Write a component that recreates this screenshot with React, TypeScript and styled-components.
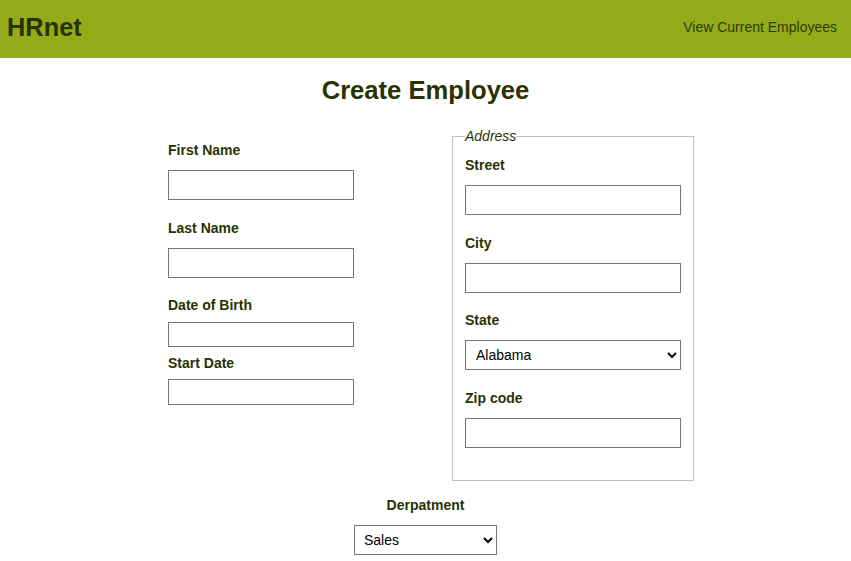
import React from "react";
import styled, { createGlobalStyle } from "styled-components";

const GlobalStyle = createGlobalStyle`
  html, body { margin: 0; padding: 0; background: #ffffff; }
  body { font-family: "Liberation Sans", Arial, sans-serif; color: #283300; }
  * { box-sizing: border-box; }
`;

const Header = styled.header`
  height: 58px;
  background: #93ab19;
  display: flex;
  align-items: center;
  justify-content: space-between;
  padding: 0 14px 4px 7px;
`;

const Logo = styled.h1`
  margin: 0;
  font-size: 25.4px;
  font-weight: 700;
  line-height: 30px;
  color: #283300;
`;

const NavLink = styled.a`
  font-size: 14px;
  color: #2f3b05;
  text-decoration: none;
`;

const Title = styled.h2`
  margin: 17px 0 0;
  text-align: center;
  font-size: 25.6px;
  line-height: 30px;
  font-weight: 700;
  color: #283300;
`;

const FormRow = styled.div`
  display: flex;
  align-items: flex-start;
  gap: 98px;
  margin: 23px 0 0 168px;
`;

const Column = styled.div`
  display: flex;
  flex-direction: column;
  width: 186px;
  padding-top: 14px;
`;

const Label = styled.label<{ $mt?: number }>`
  display: block;
  font-size: 14px;
  line-height: 16px;
  font-weight: 700;
  color: #283300;
  margin-top: ${(p) => p.$mt ?? 0}px;
`;

const TextInput = styled.input<{ $mt?: number; $h?: number }>`
  display: block;
  width: 100%;
  height: ${(p) => p.$h ?? 30}px;
  margin-top: ${(p) => p.$mt ?? 12}px;
  border: 1px solid #767676;
  border-radius: 0;
  padding: 0 4px;
  font-family: "Liberation Sans", Arial, sans-serif;
  font-size: 14px;
  background: #fff;
`;

const Fieldset = styled.fieldset`
  width: 242px;
  margin: 0;
  padding: 0 12px 32px;
  border: 1px solid #c0c0c0;
  display: flex;
  flex-direction: column;
`;

const Legend = styled.legend`
  font-size: 14px;
  line-height: 16px;
  font-style: italic;
  color: #283300;
  padding: 0;
  margin-left: 0;
`;

const Select = styled.select<{ $w?: string; $pl?: number }>`
  display: block;
  width: ${(p) => p.$w ?? "100%"};
  height: 30px;
  margin-top: 12px;
  border: 1px solid #767676;
  border-radius: 0;
  padding: 0 6px 0 ${(p) => p.$pl ?? 6}px;
  font-family: "Liberation Sans", Arial, sans-serif;
  font-size: 14px;
  color: #000;
  background: #fff;
`;

const DeptBlock = styled.div`
  display: flex;
  flex-direction: column;
  align-items: center;
  margin-top: 16px;
`;

const states = ["Alabama", "Alaska", "Arizona", "Arkansas", "California"];
const departments = ["Sales", "Marketing", "Engineering", "Human Resources", "Legal"];

export default function App() {
  return (
    <>
      <GlobalStyle />
      <Header>
        <Logo>HRnet</Logo>
        <NavLink href="#">View Current Employees</NavLink>
      </Header>
      <Title>Create Employee</Title>
      <FormRow>
        <Column>
          <Label htmlFor="first-name">First Name</Label>
          <TextInput id="first-name" type="text" />
          <Label htmlFor="last-name" $mt={20}>Last Name</Label>
          <TextInput id="last-name" type="text" />
          <Label htmlFor="dob" $mt={19}>Date of Birth</Label>
          <TextInput id="dob" type="text" $mt={9} $h={25} />
          <Label htmlFor="start" $mt={8}>Start Date</Label>
          <TextInput id="start" type="text" $mt={8} $h={26} />
        </Column>
        <Fieldset>
          <Legend>Address</Legend>
          <Label htmlFor="street" $mt={13}>Street</Label>
          <TextInput id="street" type="text" />
          <Label htmlFor="city" $mt={20}>City</Label>
          <TextInput id="city" type="text" />
          <Label htmlFor="state" $mt={19}>State</Label>
          <Select id="state" defaultValue="Alabama">
            {states.map((s) => (
              <option key={s}>{s}</option>
            ))}
          </Select>
          <Label htmlFor="zip" $mt={20}>Zip code</Label>
          <TextInput id="zip" type="number" />
        </Fieldset>
      </FormRow>
      <DeptBlock>
        <Label htmlFor="department">Derpatment</Label>
        <Select id="department" $w="143px" $pl={5} defaultValue="Sales">
          {departments.map((d) => (
            <option key={d}>{d}</option>
          ))}
        </Select>
      </DeptBlock>
    </>
  );
}
